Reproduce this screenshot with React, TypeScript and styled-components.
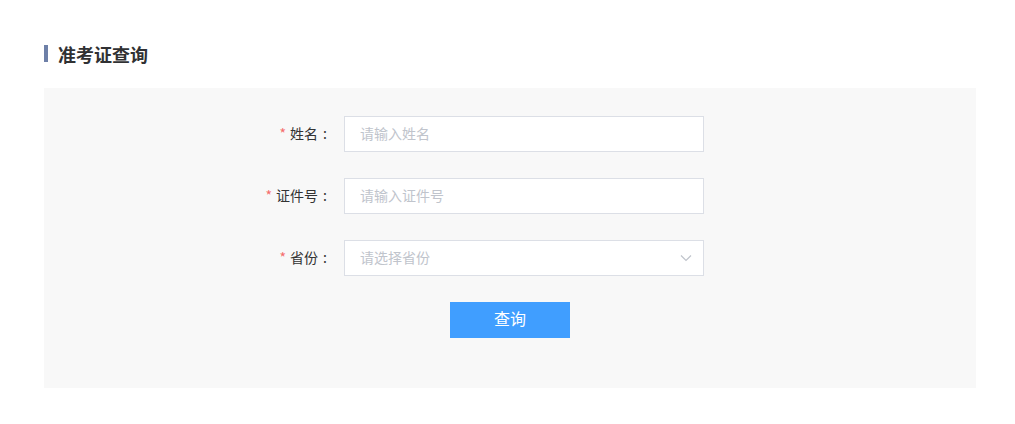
import React from "react";
import styled, { createGlobalStyle } from "styled-components";

const Global = createGlobalStyle`
  html, body { margin: 0; padding: 0; background: #fff; }
  body { font-family: "Microsoft YaHei", "Noto Sans CJK SC", "Liberation Sans", sans-serif; }
  * { box-sizing: border-box; }
`;

const Page = styled.div`
  padding: 42px 39px 0 44px;
`;

const TitleRow = styled.div`
  display: flex;
  align-items: center;
  gap: 10px;
  height: 24px;
  margin-bottom: 22px;
`;

const TitleBar = styled.span`
  width: 4px;
  height: 17px;
  margin-top: -2px;
  background: #6e80a8;
`;

const Title = styled.h2`
  margin: 0;
  font-size: 18px;
  font-weight: 700;
  color: #303133;
  line-height: 24px;
`;

const Panel = styled.div`
  background: #f8f8f8;
  padding: 28px 0 50px;
  display: flex;
  flex-direction: column;
`;

const Row = styled.div`
  display: flex;
  align-items: center;
  padding-left: 200px;
  margin-bottom: 26px;
`;

const Label = styled.label`
  width: 100px;
  padding-right: 12px;
  padding-bottom: 3px;
  text-align: right;
  font-size: 14px;
  color: #333;
`;

const Star = styled.span`
  color: #f56c6c;
  margin-right: 4px;
`;

const Colon = styled.span`
  display: inline-block;
  width: 14px;
  text-align: center;
`;

const Field = styled.div`
  position: relative;
  width: 360px;
  height: 36px;
`;

const Input = styled.input`
  width: 100%;
  height: 100%;
  border: 1px solid #dcdfe6;
  background: #fff;
  padding: 0 15px 3px;
  font-size: 14px;
  font-family: inherit;
  color: #606266;
  outline: none;
  border-radius: 0;
  &::placeholder { color: #c0c4cc; }
`;

const Chevron = styled.svg`
  position: absolute;
  right: 12px;
  top: 14px;
  width: 12px;
  height: 8px;
`;

const ButtonRow = styled.div`
  display: flex;
  justify-content: center;
`;

const Button = styled.button`
  width: 120px;
  height: 36px;
  border: none;
  padding: 0 0 5px;
  background: #409eff;
  color: #fff;
  font-size: 16px;
  font-family: inherit;
  cursor: pointer;
`;

export default function App() {
  return (
    <Page>
      <Global />
      <TitleRow>
        <TitleBar />
        <Title>准考证查询</Title>
      </TitleRow>
      <Panel>
        <Row>
          <Label><Star>*</Star>姓名<Colon>:</Colon></Label>
          <Field><Input placeholder="请输入姓名" /></Field>
        </Row>
        <Row>
          <Label><Star>*</Star>证件号<Colon>:</Colon></Label>
          <Field><Input placeholder="请输入证件号" /></Field>
        </Row>
        <Row>
          <Label><Star>*</Star>省份<Colon>:</Colon></Label>
          <Field>
            <Input placeholder="请选择省份" readOnly />
            <Chevron viewBox="0 0 12 8" fill="none">
              <path d="M1 1.5 L6 6.5 L11 1.5" stroke="#c0c4cc" strokeWidth="1.2" />
            </Chevron>
          </Field>
        </Row>
        <ButtonRow>
          <Button>查询</Button>
        </ButtonRow>
      </Panel>
    </Page>
  );
}
